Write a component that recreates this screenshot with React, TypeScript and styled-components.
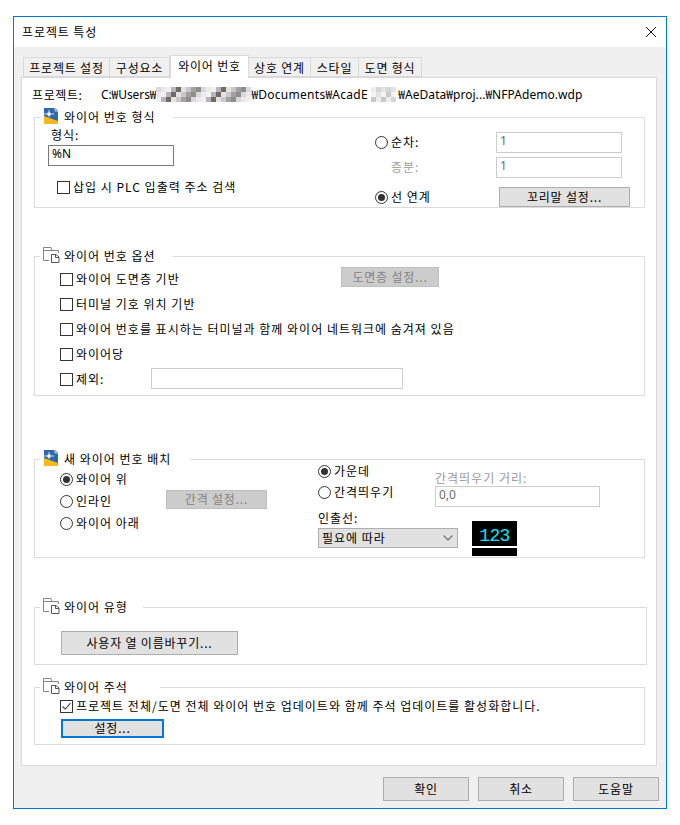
import React from "react";
import styled, { createGlobalStyle } from "styled-components";

const Global = createGlobalStyle`
  html, body { margin: 0; padding: 0; background: #fff; }
  body {
    font-family: "Noto Sans CJK KR", "Noto Sans", sans-serif;
    font-size: 12px;
    color: #000;
  }
`;

const Window = styled.div`
  box-sizing: border-box;
  width: 654px;
  height: 793px;
  margin: 16px 0 0 13px;
  border: 1px solid #0078d7;
  background: #f0f0f0;
  display: flex;
  flex-direction: column;
`;

const TitleBar = styled.div`
  height: 30px;
  flex: none;
  background: #fff;
  display: flex;
  align-items: center;
  justify-content: space-between;
  padding: 0 9px 0 8px;
`;

const Title = styled.span`
  letter-spacing: 0.9px;
  padding-bottom: 2px;
`;

const Tabs = styled.div`
  display: flex;
  align-items: flex-end;
  height: 22px;
  margin: 8px 0 0 9px;
  position: relative;
  z-index: 1;
`;

const Tab = styled.div<{ $w: number; $active?: boolean }>`
  box-sizing: border-box;
  width: ${(p) => p.$w}px;
  height: ${(p) => (p.$active ? 23 : 20)}px;
  margin-bottom: ${(p) => (p.$active ? -1 : 0)}px;
  background: ${(p) => (p.$active ? "#fff" : "#f0f0f0")};
  border: 1px solid #d9d9d9;
  border-bottom: ${(p) => (p.$active ? "none" : "1px solid #d9d9d9")};
  border-left: ${(p) => (p.$active ? "1px solid #d9d9d9" : "none")};
  display: flex;
  align-items: center;
  justify-content: center;
  letter-spacing: 0.8px;
  white-space: nowrap;
  padding-bottom: ${(p) => (p.$active ? 3 : 0)}px;
  &:first-child {
    border-left: 1px solid #d9d9d9;
  }
`;

const Pane = styled.div`
  box-sizing: border-box;
  width: 636px;
  height: 689px;
  margin-left: 7px;
  flex: none;
  background: #fff;
  border: 1px solid #d9d9d9;
  padding: 6px 8px 0 12px;
`;

const PathRow = styled.div`
  display: flex;
  align-items: center;
  height: 20px;
  margin-left: -2px;
`;

const PathLabel = styled.span`
  width: 69px;
  letter-spacing: 0.6px;
`;

const PathText = styled.span`
  font-family: "Noto Sans", sans-serif;
  display: flex;
  align-items: center;
  white-space: nowrap;
  font-size: 12px;
`;

const PathPart = styled.span<{ $ls: number }>`
  letter-spacing: ${(p) => p.$ls}px;
`;

const Won = styled.span`
  font-family: "Noto Sans CJK KR", sans-serif;
  letter-spacing: 0;
`;

const Mosaic = styled.span<{ $w: number }>`
  display: grid;
  grid-template-columns: repeat(auto-fill, 5px);
  grid-auto-rows: 5px;
  width: ${(p) => p.$w}px;
  height: 15px;
  overflow: hidden;
`;

const Group = styled.section<{ $top: number; $h: number; $w?: number }>`
  box-sizing: border-box;
  position: relative;
  width: ${(p) => p.$w ?? 611}px;
  height: ${(p) => p.$h}px;
  margin-top: ${(p) => p.$top}px;
  border: 1px solid #dcdcdc;
`;

const Legend = styled.div<{ $w: number }>`
  position: absolute;
  top: -10px;
  left: 5px;
  width: ${(p) => p.$w}px;
  height: 16px;
  background: #fff;
  display: flex;
  align-items: center;
  padding-left: 3px;
  box-sizing: border-box;
  letter-spacing: 1px;
  white-space: nowrap;
`;

const LegendIcon = styled.span`
  flex: none;
  width: 21px;
  height: 16px;
  display: flex;
`;

const Split = styled.div<{ $h?: number }>`
  display: flex;
  height: ${(p) => (p.$h ? `${p.$h}px` : "100%")};
  flex: none;
`;

const Column = styled.div<{ $w?: number; $pad?: string }>`
  box-sizing: border-box;
  display: flex;
  flex-direction: column;
  flex: none;
  width: ${(p) => (p.$w ? `${p.$w}px` : "auto")};
  padding: ${(p) => p.$pad ?? "0"};
`;

const Row = styled.div<{ $h?: number; $mt?: number; $pl?: number }>`
  display: flex;
  align-items: center;
  height: ${(p) => p.$h ?? 25}px;
  margin-top: ${(p) => p.$mt ?? 0}px;
  padding-left: ${(p) => p.$pl ?? 0}px;
  flex: none;
`;

const Label = styled.span<{ $w?: number; $muted?: boolean; $ml?: number }>`
  box-sizing: border-box;
  flex: none;
  width: ${(p) => (p.$w ? `${p.$w}px` : "auto")};
  margin-left: ${(p) => p.$ml ?? 0}px;
  padding-bottom: 2px;
  color: ${(p) => (p.$muted ? "#9a9a9a" : "#000")};
  letter-spacing: 1px;
  white-space: nowrap;
`;

const Box = styled.span`
  box-sizing: border-box;
  flex: none;
  width: 13px;
  height: 13px;
  border: 1px solid #333;
  background: #fff;
  margin-right: 3px;
  display: flex;
  align-items: center;
  justify-content: center;
`;

const Radio = styled.span<{ $on?: boolean }>`
  box-sizing: border-box;
  flex: none;
  width: 13px;
  height: 13px;
  border: 1px solid #333;
  border-radius: 50%;
  margin-right: 3px;
  background: #fff;
  display: flex;
  align-items: center;
  justify-content: center;
  &::after {
    content: "";
    display: ${(p) => (p.$on ? "block" : "none")};
    width: 7px;
    height: 7px;
    border-radius: 50%;
    background: #333;
  }
`;

const Input = styled.div<{ $w: number; $off?: boolean; $h?: number; $up?: boolean }>`
  box-sizing: border-box;
  flex: none;
  width: ${(p) => p.$w}px;
  height: ${(p) => p.$h ?? 21}px;
  align-self: ${(p) => (p.$up ? "flex-start" : "auto")};
  margin-top: ${(p) => (p.$up ? 1 : 0)}px;
  border: 1px solid ${(p) => (p.$off ? "#cccccc" : "#7a7a7a")};
  background: #fff;
  color: ${(p) => (p.$off ? "#6d6d6d" : "#000")};
  padding: 0 3px;
  line-height: 15px;
  font-family: "Noto Sans", sans-serif;
`;

const Button = styled.div<{
  $w: number;
  $h?: number;
  $off?: boolean;
  $focus?: boolean;
  $ml?: number;
  $mt?: number;
  $up?: boolean;
}>`
  box-sizing: border-box;
  flex: none;
  width: ${(p) => p.$w}px;
  height: ${(p) => p.$h ?? 20}px;
  margin-left: ${(p) => p.$ml ?? 0}px;
  margin-top: ${(p) => p.$mt ?? 0}px;
  align-self: ${(p) => (p.$up ? "flex-start" : "auto")};
  padding-bottom: 2px;
  background: ${(p) => (p.$off ? "#cccccc" : "#e1e1e1")};
  border: ${(p) =>
    p.$focus ? "2px solid #0078d7" : `1px solid ${p.$off ? "#bfbfbf" : "#adadad"}`};
  color: ${(p) => (p.$off ? "#838383" : "#000")};
  display: flex;
  align-items: center;
  justify-content: center;
  letter-spacing: 0.8px;
  white-space: nowrap;
`;

const Select = styled.div`
  box-sizing: border-box;
  width: 140px;
  height: 20px;
  background: #e1e1e1;
  border: 1px solid #adadad;
  display: flex;
  align-items: center;
  justify-content: space-between;
  padding: 0 4px 2px 3px;
  letter-spacing: 1px;
`;

const Preview = styled.div`
  flex: none;
  width: 45px;
  margin: 13px 0 0 14px;
  display: flex;
  flex-direction: column;
  gap: 2px;
`;

const PreviewTop = styled.div`
  box-sizing: border-box;
  height: 25px;
  padding-top: 5px;
  background: #000;
  color: #00eaff;
  font-family: "Liberation Mono", monospace;
  font-size: 18px;
  letter-spacing: -0.6px;
  display: flex;
  align-items: center;
  justify-content: center;
`;

const PreviewBottom = styled.div`
  height: 8px;
  background: #000;
`;

const Footer = styled.div`
  display: flex;
  justify-content: flex-end;
  gap: 9px;
  padding: 11px 7px 0 0;
`;

const CloseIcon = () => (
  <svg width="12" height="12" viewBox="0 0 12 12">
    <path d="M1 1 L11 11 M11 1 L1 11" stroke="#111" strokeWidth="1" fill="none" />
  </svg>
);

const BlueIcon = () => (
  <svg width="14" height="16" viewBox="0 0 14 16" style={{ marginLeft: 1 }}>
    <path d="M0 0 H11 L14 3 V16 H0 Z" fill="#2f6aa8" />
    <path d="M0 8 L14 13 V16 H0 Z" fill="#f5b81e" />
    <path d="M0 6 H10 M5 2 V9 M11 0 V3 H14" stroke="#cfe0f0" strokeWidth="1" fill="none" />
    <rect x="3.5" y="4.5" width="3" height="3" fill="#fff" />
  </svg>
);

const FolderIcon = () => (
  <svg width="17" height="16" viewBox="0 0 17 16">
    <path d="M0.5 13.5 H6 M0.5 13.5 V0.5 H8 L9 3.5 H15.5 V6 M0.5 3.5 H9" stroke="#858585" fill="none" />
    <path d="M8.5 15.5 V7.5 H13 L16 10 V15.5 Z" fill="#fff" stroke="#555" />
    <path d="M12.5 7.5 V10.5 H16" stroke="#555" fill="none" />
  </svg>
);

const Chevron = () => (
  <svg width="10" height="6" viewBox="0 0 10 6" style={{ marginTop: 2 }}>
    <path d="M0.7 0.7 L5 5 L9.3 0.7" stroke="#666" strokeWidth="1.1" fill="none" />
  </svg>
);

const Check = () => (
  <svg width="11" height="11" viewBox="0 0 11 11">
    <path d="M1.5 5.5 L4.2 8 L9.5 2.2" stroke="#444" strokeWidth="1.1" fill="none" />
  </svg>
);

const darkShades = ["#d9d9d9", "#8d8d8d", "#ece8ee", "#b9b4bb", "#f3f1f0", "#6f6a68", "#c9c6d0", "#e6e2dc", "#a5a09f"];
const lightShades = ["#e2e2e2", "#f4f4f4", "#c9c9c9", "#ededed", "#d6d6d6"];

const Blur = ({ w, seed, shades }: { w: number; seed: number; shades: string[] }) => {
  const cells = Math.ceil(w / 5) * 3;
  return (
    <Mosaic $w={w}>
      {Array.from({ length: cells }, (_, i) => (
        <span key={i} style={{ background: shades[(i * 7 + seed + (i % 3) * 4) % shades.length] }} />
      ))}
    </Mosaic>
  );
};

const CheckRow = ({ children, checked }: { children: React.ReactNode; checked?: boolean }) => (
  <>
    <Box>{checked && <Check />}</Box>
    <Label>{children}</Label>
  </>
);

export default function App() {
  return (
    <>
      <Global />
      <Window>
        <TitleBar>
          <Title>프로젝트 특성</Title>
          <CloseIcon />
        </TitleBar>
        <Tabs>
          <Tab $w={87}>프로젝트 설정</Tab>
          <Tab $w={60}>구성요소</Tab>
          <Tab $w={79} $active>와이어 번호</Tab>
          <Tab $w={62}>상호 연계</Tab>
          <Tab $w={48}>스타일</Tab>
          <Tab $w={63}>도면 형식</Tab>
        </Tabs>
        <Pane>
          <PathRow>
            <PathLabel>프로젝트:</PathLabel>
            <PathText>
              <PathPart $ls={-0.1}>
                C:<Won>₩</Won>Users<Won>₩</Won>
              </PathPart>
              <Blur w={95} seed={0} shades={darkShades} />
              <PathPart $ls={0.3}>
                <Won>₩</Won>Documents<Won>₩</Won>AcadE&nbsp;
              </PathPart>
              <Blur w={27} seed={3} shades={lightShades} />
              <PathPart $ls={0.05}>
                <Won>₩</Won>AeData<Won>₩</Won>proj...<Won>₩</Won>NFPAdemo.wdp
              </PathPart>
            </PathText>
          </PathRow>

          <Group $top={13} $h={91}>
            <Legend $w={133}>
              <LegendIcon>
                <BlueIcon />
              </LegendIcon>
              와이어 번호 형식
            </Legend>
            <Split>
              <Column $w={340} $pad="8px 0 0 13px">
                <Row $h={19}>
                  <Label $ml={3}>형식:</Label>
                </Row>
                <Input $w={126} $h={21}>
                  %N
                </Input>
                <Row $h={20} $mt={11} $pl={9}>
                  <CheckRow>삽입 시 PLC 입출력 주소 검색</CheckRow>
                </Row>
              </Column>
              <Column $pad="14px 0 0 0">
                <Row $h={21}>
                  <Radio />
                  <Label $w={105}>순차:</Label>
                  <Input $w={126} $off>1</Input>
                </Row>
                <Row $h={21} $mt={4}>
                  <Label $w={105} $ml={16} $muted>증분:</Label>
                  <Input $w={126} $off>1</Input>
                </Row>
                <Row $h={20} $mt={9}>
                  <Radio $on />
                  <Label $w={108}>선 연계</Label>
                  <Button $w={131}>꼬리말 설정...</Button>
                </Row>
              </Column>
            </Split>
          </Group>

          <Group $top={48} $h={140}>
            <Legend $w={133}>
              <LegendIcon>
                <FolderIcon />
              </LegendIcon>
              와이어 번호 옵션
            </Legend>
            <Column $pad="10px 0 0 25px">
              <Row>
                <Column $w={281}>
                  <Row>
                    <CheckRow>와이어 도면층 기반</CheckRow>
                  </Row>
                </Column>
                <Button $w={98} $off $up>도면층 설정...</Button>
              </Row>
              <Row>
                <CheckRow>터미널 기호 위치 기반</CheckRow>
              </Row>
              <Row>
                <CheckRow>와이어 번호를 표시하는 터미널과 함께 와이어 네트워크에 숨겨져 있음</CheckRow>
              </Row>
              <Row>
                <CheckRow>와이어당</CheckRow>
              </Row>
              <Row>
                <Box />
                <Label $w={75}>제외:</Label>
                <Input $w={252} $off $h={21} $up />
              </Row>
            </Column>
          </Group>

          <Group $top={63} $h={99}>
            <Legend $w={150}>
              <LegendIcon>
                <BlueIcon />
              </LegendIcon>
              새 와이어 번호 배치
            </Legend>
            <Split>
              <Column $w={283} $pad="8px 0 0 25px">
                <Row $h={22}>
                  <Radio $on />
                  <Label>와이어 위</Label>
                </Row>
                <Row $h={22}>
                  <Radio />
                  <Label $w={90}>인라인</Label>
                  <Button $w={101} $h={19} $off $up>간격 설정...</Button>
                </Row>
                <Row $h={22}>
                  <Radio />
                  <Label>와이어 아래</Label>
                </Row>
              </Column>
              <Column>
                <Split $h={48}>
                  <Column $w={117} $pad="1px 0 0 0">
                    <Row $h={21}>
                      <Radio $on />
                      <Label>가운데</Label>
                    </Row>
                    <Row $h={20}>
                      <Radio />
                      <Label>간격띄우기</Label>
                    </Row>
                  </Column>
                  <Column $pad="10px 0 0 0">
                    <Row $h={16}>
                      <Label $muted>간격띄우기 거리:</Label>
                    </Row>
                    <Input $w={165} $off>0,0</Input>
                  </Column>
                </Split>
                <Split $h={48}>
                  <Column>
                    <Row $h={20}>
                      <Label>인출선:</Label>
                    </Row>
                    <Select>
                      필요에 따라
                      <Chevron />
                    </Select>
                  </Column>
                  <Preview>
                    <PreviewTop>123</PreviewTop>
                    <PreviewBottom />
                  </Preview>
                </Split>
              </Column>
            </Split>
          </Group>

          <Group $top={49} $h={58} $w={613}>
            <Legend $w={103}>
              <LegendIcon>
                <FolderIcon />
              </LegendIcon>
              와이어 유형
            </Legend>
            <Column $pad="23px 0 0 26px">
              <Button $w={177} $h={24}>사용자 열 이름바꾸기...</Button>
            </Column>
          </Group>

          <Group $top={22} $h={58}>
            <Legend $w={120}>
              <LegendIcon>
                <FolderIcon />
              </LegendIcon>
              와이어 주석
            </Legend>
            <Column $pad="9px 0 0 25px">
              <Row $h={19}>
                <CheckRow checked>프로젝트 전체/도면 전체 와이어 번호 업데이트와 함께 주석 업데이트를 활성화합니다.</CheckRow>
              </Row>
              <Button $w={103} $h={19} $focus $ml={1} $mt={3}>설정...</Button>
            </Column>
          </Group>
        </Pane>
        <Footer>
          <Button $w={86} $h={24}>확인</Button>
          <Button $w={86} $h={24}>취소</Button>
          <Button $w={86} $h={24}>도움말</Button>
        </Footer>
      </Window>
    </>
  );
}
